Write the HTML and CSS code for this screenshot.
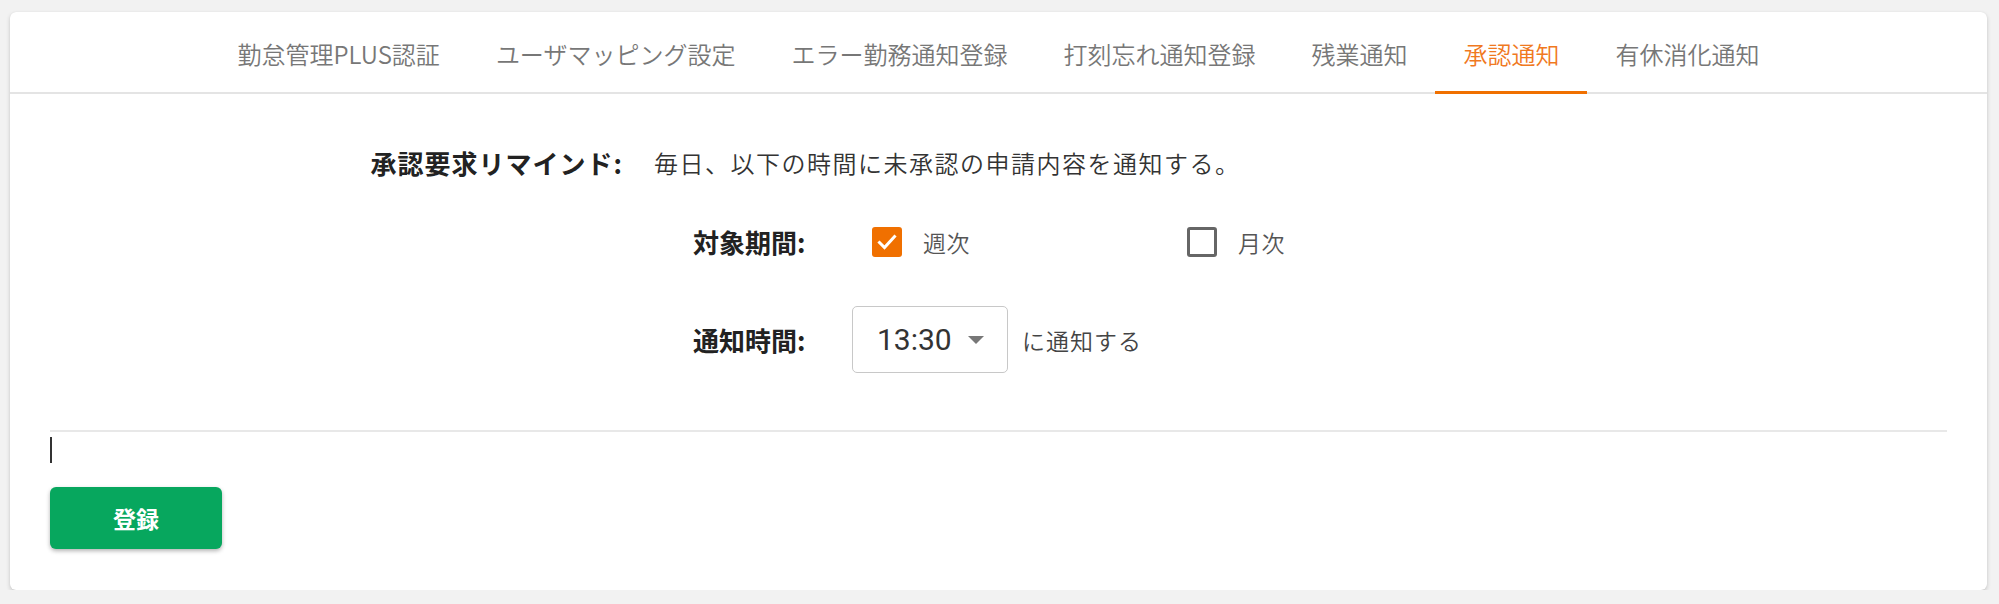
FILE: index.html
```html
<!DOCTYPE html>
<html lang="ja">
<head>
  <meta charset="UTF-8">
  <title>通知設定 - 承認通知</title>
  <link rel="stylesheet" href="styles.css">
</head>
<body>
  <div class="card">
    <nav class="tabs">
      <a href="#" class="tab">勤怠管理PLUS認証</a>
      <a href="#" class="tab">ユーザマッピング設定</a>
      <a href="#" class="tab">エラー勤務通知登録</a>
      <a href="#" class="tab">打刻忘れ通知登録</a>
      <a href="#" class="tab">残業通知</a>
      <a href="#" class="tab active">承認通知</a>
      <a href="#" class="tab">有休消化通知</a>
    </nav>
    <main class="content">
      <div class="form-row">
        <div class="main-label">承認要求リマインド:</div>
        <div class="main-body">
          <p class="desc">毎日、以下の時間に未承認の申請内容を通知する。</p>
          <div class="sub-row period">
            <div class="sub-label">対象期間:</div>
            <label class="check">
              <span class="box checked">
                <svg viewBox="0 0 24 24" width="26" height="26"><path d="M4.5 12.5l5 5L19.5 6.5" fill="none" stroke="#fff" stroke-width="3" stroke-linecap="square"/></svg>
              </span>
              <span class="check-text">週次</span>
            </label>
            <label class="check">
              <span class="box"></span>
              <span class="check-text">月次</span>
            </label>
          </div>
          <div class="sub-row time">
            <div class="sub-label">通知時間:</div>
            <div class="select">
              <span class="select-value">13:30</span>
              <span class="caret"></span>
            </div>
            <span class="suffix">に通知する</span>
          </div>
        </div>
      </div>
      <hr class="divider">
      <div class="cursor-line"><span class="caret-bar"></span></div>
      <button class="submit">登録</button>
    </main>
  </div>
</body>
</html>
```

FILE: styles.css
```css
/* Base */
body {
  margin: 0;
  background-color: #f2f2f2;
  color: #222;
  font-family: "Noto Sans CJK JP", "Noto Sans", sans-serif;
}

.card {
  margin: 12px 12px 0 10px;
  height: 578px;
  background-color: #fff;
  border-radius: 6px;
  box-shadow: 0 2px 4px rgba(0, 0, 0, 0.18), 0 0 1px rgba(0, 0, 0, 0.1);
  overflow: hidden;
}

/* Tabs */
.tabs {
  display: flex;
  justify-content: center;
  height: 80px;
  border-bottom: 2px solid #e4e4e4;
}
.tab {
  display: flex;
  align-items: center;
  padding: 0 28px;
  margin-bottom: -2px;
  font-size: 24px;
  font-weight: 350;
  color: #777;
  text-decoration: none;
  border-bottom: 3px solid transparent;
  padding-top: 3px;
}
.tab.active { color: #f0791f; border-bottom-color: #f07000; }

/* Form */
.content { padding: 51px 40px 0 40px; }
.form-row { display: flex; }
.main-label {
  width: 580px;
  text-align: right;
  padding-right: 31px;
  font-size: 26px;
  font-weight: bold;
  line-height: 36px;
  letter-spacing: 1px;
  margin-left: -7px;
}
.desc { margin: 0; font-size: 24px; font-weight: 350; line-height: 36px; color: #333; letter-spacing: 1.5px; }

.sub-row { display: flex; align-items: center; padding-left: 39px; }
.sub-row.period { margin-top: 43px; height: 36px; }
.sub-row.time { margin-top: 46px; }
.sub-label {
  width: 159px;
  font-size: 26px;
  font-weight: bold;
  line-height: 36px;
}

.check { display: flex; align-items: center; padding-left: 20px; width: 295px; }
.box {
  width: 30px; height: 30px;
  box-sizing: border-box;
  border: 3px solid #666;
  border-radius: 3px;
  display: flex; align-items: center; justify-content: center;
}
.box.checked { background-color: #f07000; border-color: #f07000; }
.check-text { margin-left: 21px; font-size: 23px; font-weight: 350; color: #555; letter-spacing: 0.5px; }

.select {
  width: 156px; height: 67px;
  box-sizing: border-box;
  border: 1.5px solid #c8c8c8;
  border-radius: 5px;
  display: flex; align-items: center;
  padding-left: 24px;
}
.select-value { font-family: Roboto, "Noto Sans", sans-serif; font-size: 30px; color: #333; }
.caret {
  margin-left: 16px;
  width: 0; height: 0;
  border-left: 8px solid transparent;
  border-right: 8px solid transparent;
  border-top: 8px solid #777;
}
.suffix { margin-left: 14px; font-size: 23px; font-weight: 350; color: #444; letter-spacing: 1px; }

.divider { margin: 57px 0 0 0; border: none; border-top: 2px solid #e8e8e8; }
.cursor-line { height: 33px; padding-top: 5px; box-sizing: border-box; }
.caret-bar { display: block; width: 2px; height: 26px; background-color: #333; }

.submit {
  margin-top: 22px;
  width: 172px; height: 62px;
  border: none; border-radius: 6px;
  background-color: #07a75e;
  color: #fff;
  font-family: "Noto Sans CJK JP", sans-serif;
  font-size: 23px; font-weight: bold;
  box-shadow: 0 2px 4px rgba(0, 0, 0, 0.3);
  cursor: pointer;
}
```
